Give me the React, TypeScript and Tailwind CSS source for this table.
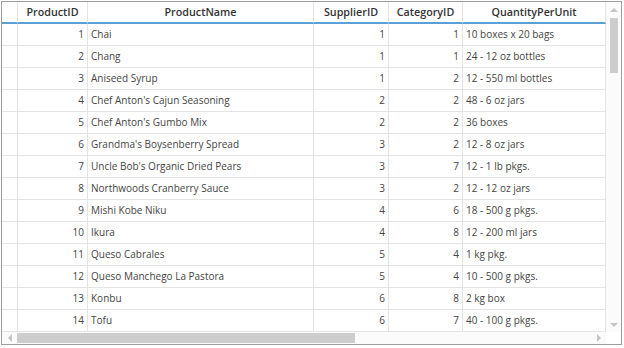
import React from 'react';

// Northwind products grid, with the row-header strip and both scroll bars
interface Product {
    id: number;
    name: string;
    supplierId: number;
    categoryId: number;
    quantity: string;
}

const products: Product[] = [
    { id: 1, name: "Chai", supplierId: 1, categoryId: 1, quantity: "10 boxes x 20 bags" },
    { id: 2, name: "Chang", supplierId: 1, categoryId: 1, quantity: "24 - 12 oz bottles" },
    { id: 3, name: "Aniseed Syrup", supplierId: 1, categoryId: 2, quantity: "12 - 550 ml bottles" },
    { id: 4, name: "Chef Anton's Cajun Seasoning", supplierId: 2, categoryId: 2, quantity: "48 - 6 oz jars" },
    { id: 5, name: "Chef Anton's Gumbo Mix", supplierId: 2, categoryId: 2, quantity: "36 boxes" },
    { id: 6, name: "Grandma's Boysenberry Spread", supplierId: 3, categoryId: 2, quantity: "12 - 8 oz jars" },
    { id: 7, name: "Uncle Bob's Organic Dried Pears", supplierId: 3, categoryId: 7, quantity: "12 - 1 lb pkgs." },
    { id: 8, name: "Northwoods Cranberry Sauce", supplierId: 3, categoryId: 2, quantity: "12 - 12 oz jars" },
    { id: 9, name: "Mishi Kobe Niku", supplierId: 4, categoryId: 6, quantity: "18 - 500 g pkgs." },
    { id: 10, name: "Ikura", supplierId: 4, categoryId: 8, quantity: "12 - 200 ml jars" },
    { id: 11, name: "Queso Cabrales", supplierId: 5, categoryId: 4, quantity: "1 kg pkg." },
    { id: 12, name: "Queso Manchego La Pastora", supplierId: 5, categoryId: 4, quantity: "10 - 500 g pkgs." },
    { id: 13, name: "Konbu", supplierId: 6, categoryId: 8, quantity: "2 kg box" },
    { id: 14, name: "Tofu", supplierId: 6, categoryId: 7, quantity: "40 - 100 g pkgs." },
];

const headers = ["ProductID", "ProductName", "SupplierID", "CategoryID", "QuantityPerUnit"];

const Arrow: React.FC<{ dir: 'up' | 'down' | 'left' | 'right' }> = ({ dir }) => {
    const points = {
        up: "0,5 4,1 8,5",
        down: "0,1 4,5 8,1",
        left: "5,0 1,4 5,8",
        right: "1,0 5,4 1,8",
    }[dir];
    const vertical = dir === 'up' || dir === 'down';
    return (
        <svg width={vertical ? 8 : 6} height={vertical ? 6 : 8} viewBox={vertical ? "0 0 8 6" : "0 0 6 8"}>
            <polygon points={points} fill="#c4c4c4" />
        </svg>
    );
};

const cell = "h-[22px] border-r border-b border-[#e4e4e4] px-[3px] flex items-center whitespace-nowrap overflow-hidden text-[10px] text-[#444]";

export default function App() {
    return (
        <div className="w-[624px] h-[348px] bg-white pt-px pl-px" style={{ fontFamily: '"Open Sans", "Noto Sans", sans-serif' }}>
            <div className="w-[621px] h-[344px] border border-[#9e9e9e] flex flex-col bg-white">
                <div className="flex flex-row h-[330px]">
                    <div className="grid grid-cols-[16px_70px_226px_75px_74px_143px] content-start">
                        {/* header row */}
                        <div className="h-[22px] border-r border-b-2 border-r-[#e4e4e4] border-b-[#5a9fd6]" />
                        {headers.map((h) => (
                            <div
                                key={h}
                                className="h-[22px] border-r border-b-2 border-r-[#e4e4e4] border-b-[#5a9fd6] flex items-center justify-center text-[10.75px] font-semibold text-[#333]"
                            >
                                {h}
                            </div>
                        ))}
                        {products.map((p) => (
                            <React.Fragment key={p.id}>
                                <div className={cell} />
                                <div className={`${cell} justify-end`}>{p.id}</div>
                                <div className={cell}>{p.name}</div>
                                <div className={`${cell} justify-end`}>{p.supplierId}</div>
                                <div className={`${cell} justify-end`}>{p.categoryId}</div>
                                <div className={cell}>{p.quantity}</div>
                            </React.Fragment>
                        ))}
                    </div>
                    {/* vertical scroll bar */}
                    <div className="w-[15px] flex flex-col items-center bg-[#fbfbfb]">
                        <div className="h-[15px] flex items-center justify-center">
                            <Arrow dir="up" />
                        </div>
                        <div className="w-[8px] h-[55px] bg-[#cdcdcd] mt-px" />
                        <div className="flex-1" />
                        <div className="h-[15px] flex items-center justify-center">
                            <Arrow dir="down" />
                        </div>
                    </div>
                </div>
                {/* horizontal scroll bar */}
                <div className="flex flex-row flex-1">
                    <div className="w-[604px] flex flex-row items-center bg-[#fbfbfb]">
                        <div className="w-[15px] flex items-center justify-center">
                            <Arrow dir="left" />
                        </div>
                        <div className="w-[338px] h-[10px] bg-[#cdcdcd]" />
                        <div className="flex-1" />
                        <div className="w-[15px] flex items-center justify-center">
                            <Arrow dir="right" />
                        </div>
                    </div>
                    <div className="flex-1 bg-white" />
                </div>
            </div>
        </div>
    );
}
